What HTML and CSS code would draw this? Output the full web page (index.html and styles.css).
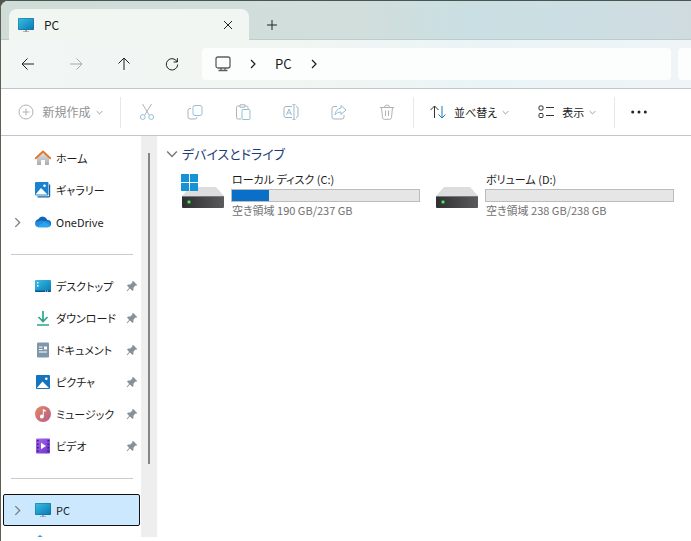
FILE: index.html
```html
<!DOCTYPE html>
<html lang="ja">
<head>
    <meta charset="UTF-8">
    <meta name="viewport" content="width=device-width, initial-scale=1.0">
    <title>PC</title>
    <link rel="stylesheet" href="styles.css">
</head>
<body>
    <!-- Shared icons -->
    <svg class="defs" width="0" height="0" aria-hidden="true">
        <defs>
            <linearGradient id="screen" x1="0" y1="0" x2="1" y2="1">
                <stop offset="0" stop-color="#35c1e0"/>
                <stop offset="1" stop-color="#0b76b8"/>
            </linearGradient>
            <linearGradient id="wall" x1="0" y1="0" x2="0" y2="1">
                <stop offset="0" stop-color="#e8e8ea"/>
                <stop offset="1" stop-color="#a9abb0"/>
            </linearGradient>
            <linearGradient id="disc" x1="0" y1="0" x2="1" y2="1">
                <stop offset="0" stop-color="#e58a5c"/>
                <stop offset="1" stop-color="#b65a92"/>
            </linearGradient>
            <linearGradient id="film" x1="0" y1="0" x2="1" y2="1">
                <stop offset="0" stop-color="#a866ee"/>
                <stop offset="1" stop-color="#6b35c9"/>
            </linearGradient>
            <linearGradient id="case" x1="0" y1="0" x2="1" y2="0">
                <stop offset="0" stop-color="#2f2f31"/>
                <stop offset="1" stop-color="#5a5a5c"/>
            </linearGradient>
            <symbol id="i-pc" viewBox="0 0 16 16">
                <path d="M7 12h2v2.200h2v.8H5v-.8h2z" fill="#98a2a8"/>
                <rect y="1" width="16" height="12" rx="1" fill="#1a6a8c"/>
                <rect x=".5" y="1.500" width="15" height="11" rx=".5" fill="url(#screen)"/>
            </symbol>
            <symbol id="i-right" viewBox="0 0 10 10">
                <path d="M3 1l4 4-4 4" fill="none" stroke="currentColor" stroke-width="1.200"/>
            </symbol>
            <symbol id="i-down" viewBox="0 0 10 10">
                <path d="M1 3l4 4 4-4" fill="none" stroke="currentColor" stroke-width="1.200"/>
            </symbol>
            <symbol id="i-pin" viewBox="0 0 12 12">
                <path d="M7 .8L11.200 5l-1 .8-.8-.2-2 2.200.1 2.200-1.100 1L4 8.600 1.200 11.300l-.7-.6L3.200 7.900 1 5.600l1-1.100 2.200.1 2.200-2L6.200 1.700z" fill="#87919b"/>
            </symbol>
            <symbol id="i-drive" viewBox="0 0 42 22">
                <path d="M8 0h26l8 9H0z" fill="#dcdddf"/>
                <rect y="9" width="42" height="12" rx="1" fill="url(#case)"/>
                <rect y="9" width="42" height="1" fill="#77797b"/>
                <circle cx="7" cy="15" r="2.200" fill="#2c7a35"/>
                <circle cx="7" cy="15" r="1.300" fill="#5be36c"/>
            </symbol>
        </defs>
    </svg>

    <div class="window">
        <header class="tabbar">
            <div class="tab">
                <svg class="icon"><use href="#i-pc"/></svg>
                <span class="tab-title">PC</span>
                <button class="tab-btn" aria-label="タブを閉じる">
                    <svg width="10" height="10" viewBox="0 0 10 10"><path d="M1 1l8 8M9 1L1 9"/></svg>
                </button>
            </div>
            <button class="tab-btn new-tab" aria-label="新しいタブ">
                <svg width="12" height="12" viewBox="0 0 12 12"><path d="M6 1v10M1 6h10"/></svg>
            </button>
        </header>

        <nav class="navbar">
            <button class="nav-btn" aria-label="戻る">
                <svg width="14" height="14" viewBox="0 0 14 14"><path d="M13 7H1.500M6.500 1.500L1 7l5.500 5.500"/></svg>
            </button>
            <button class="nav-btn" aria-label="進む" disabled>
                <svg width="14" height="14" viewBox="0 0 14 14"><path d="M1 7h11.500M7.500 1.500L13 7l-5.500 5.500"/></svg>
            </button>
            <button class="nav-btn" aria-label="上へ">
                <svg width="14" height="14" viewBox="0 0 14 14"><path d="M7 13V1.500M1.500 6.500L7 1l5.500 5.500"/></svg>
            </button>
            <button class="nav-btn" aria-label="最新の情報に更新">
                <svg width="14" height="14" viewBox="0 0 14 14"><path d="M12.200 5A5.700 5.700 0 1 0 12.700 7.500M12.400 1.200V5H8.600"/></svg>
            </button>
            <div class="address">
                <svg class="icon" viewBox="0 0 16 16"><path d="M3 1h10a2 2 0 0 1 2 2v7a2 2 0 0 1-2 2H3a2 2 0 0 1-2-2V3a2 2 0 0 1 2-2zM6 12v2.500M10 12v2.500M3.500 14.500h9" fill="none" stroke="#5b5f62" stroke-width="1.300"/></svg>
                <svg class="chevron"><use href="#i-right"/></svg>
                <a href="#">PC</a>
                <svg class="chevron"><use href="#i-right"/></svg>
            </div>
            <div class="search"></div>
        </nav>

        <div class="toolbar">
            <button class="tool new" disabled>
                <svg class="icon" viewBox="0 0 16 16"><circle cx="8" cy="8" r="7"/><path d="M8 4.500v7M4.500 8h7"/></svg>
                <span>新規作成</span>
                <svg class="caret"><use href="#i-down"/></svg>
            </button>
            <div class="tool-group">
                <button class="tool" aria-label="切り取り" disabled>
                    <svg class="icon" viewBox="0 0 16 16"><path d="M3.500 0l6.700 11M12.500 0L5.800 11"/><g class="blue"><circle cx="3.800" cy="13" r="2.400"/><circle cx="12.200" cy="13" r="2.400"/></g></svg>
                </button>
                <button class="tool" aria-label="コピー" disabled>
                    <svg class="icon" viewBox="0 0 16 16"><path d="M4 4.500H3a2 2 0 0 0-2 2V13a2 2 0 0 0 2 2h5a2 2 0 0 0 2-2"/><rect class="blue" x="6" y="1.500" width="9" height="10" rx="2"/></svg>
                </button>
                <button class="tool" aria-label="貼り付け" disabled>
                    <svg class="icon" viewBox="0 0 16 16"><path d="M6 15H3a1.500 1.500 0 0 1-1.500-1.500v-10A1.500 1.500 0 0 1 3 2h2M10 2h1.500A1.500 1.500 0 0 1 13 3.500V5M5 .8h5v2.400H5z"/><rect class="blue" x="7" y="5.500" width="8" height="10" rx="1"/></svg>
                </button>
                <button class="tool" aria-label="名前の変更" disabled>
                    <svg class="icon" viewBox="0 0 16 16"><path d="M9 2.500H3a2 2 0 0 0-2 2v7a2 2 0 0 0 2 2h6M13 2.500a2 2 0 0 1 2 2v7a2 2 0 0 1-2 2"/><path class="blue" d="M3.500 11L6 5l2.500 6M4.400 9h3.200M9.500.7h3M9.500 15.300h3M11 .7v14.600"/></svg>
                </button>
                <button class="tool" aria-label="共有" disabled>
                    <svg class="icon" viewBox="0 0 16 16"><path d="M6 2.500H3a2 2 0 0 0-2 2V13a2 2 0 0 0 2 2h8a2 2 0 0 0 2-2v-2"/><path class="blue" d="M10 1.500L15 6l-5 4.500V8C7 8 5.500 9 4 11c.3-4 2.500-6.500 6-7z"/></svg>
                </button>
                <button class="tool" aria-label="削除" disabled>
                    <svg class="icon" viewBox="0 0 16 16"><path d="M1 3.500h14M5.500 3.500a2.500 2.500 0 0 1 5 0M2.500 3.500l1 10A2 2 0 0 0 5.500 15.300h5a2 2 0 0 0 2-1.800l1-10M6.500 6.500v5.500M9.500 6.500v5.500"/></svg>
                </button>
            </div>
            <div class="view-group">
                <button class="tool">
                    <svg class="icon" viewBox="0 0 16 16"><path d="M4.500 14V2M.5 6l4-4 4 4"/><path class="sort-down" d="M12 2v12M8.500 10.500L12 14l3.500-3.500"/></svg>
                    <span>並べ替え</span>
                    <svg class="caret"><use href="#i-down"/></svg>
                </button>
                <button class="tool">
                    <svg class="icon" viewBox="0 0 16 16"><rect x="1" y="2" width="4" height="4" rx="1"/><rect x="1" y="9.500" width="4" height="4" rx="1"/><path d="M8 3.500h8M8 11.500h8"/></svg>
                    <span>表示</span>
                    <svg class="caret"><use href="#i-down"/></svg>
                </button>
            </div>
            <button class="tool more" aria-label="もっと見る">
                <svg class="icon" viewBox="0 0 16 16"><g fill="#222" stroke="none"><circle cx="1.700" cy="8" r="1.500"/><circle cx="8" cy="8" r="1.500"/><circle cx="14.300" cy="8" r="1.500"/></g></svg>
            </button>
        </div>

        <div class="main">
            <aside class="sidebar">
                <a class="item" href="#">
                    <svg class="icon" viewBox="0 0 16 16"><path d="M2 7l6-6 6 6v8h-4v-5H6v5H2z" fill="url(#wall)"/><path d="M.8 8.300L8 1.500l7.200 6.800" fill="none" stroke="#df7a2e" stroke-width="1.900" stroke-linecap="round" stroke-linejoin="round"/></svg>
                    <span>ホーム</span>
                </a>
                <a class="item" href="#">
                    <svg class="icon" viewBox="0 0 16 16"><path d="M14 2.500h1.200V14a1.500 1.500 0 0 1-1.500 1.500H2.500V14.300H14z" fill="#1d5f93"/><rect width="13.500" height="13.500" rx="1" fill="#1b82cf"/><path d="M.5 12.500L6 6l6.500 6.500z" fill="#fff"/><circle cx="9.500" cy="3.800" r="1.300" fill="#fff"/></svg>
                    <span>ギャラリー</span>
                </a>
                <a class="item" href="#">
                    <svg class="expander"><use href="#i-right"/></svg>
                    <svg class="icon" viewBox="0 0 16 16"><path d="M4 13a4 4 0 0 1-.8-7.800A5 5 0 0 1 12.300 6 3.500 3.500 0 0 1 13 13z" fill="#1266b8"/><path d="M3.500 13.200a3.300 3.300 0 0 1-2.700-5.200l4.700-1.200 7.500.5A3 3 0 0 1 13 13.200z" fill="#1e8fe0"/><path d="M2 12.800L9.500 8l5.800 3.500A3 3 0 0 1 13 13.200H3.500z" fill="#2ba6ee"/></svg>
                    <span>OneDrive</span>
                </a>
                <hr>
                <a class="item" href="#">
                    <svg class="icon" viewBox="0 0 16 16"><rect y="2" width="16" height="12" rx="1" fill="url(#screen)"/><path d="M2 4h1.500v1.500H2zM2 7h1.500v1.500H2z" fill="#fff"/><path d="M0 12.500h16V13a1 1 0 0 1-1 1H1a1 1 0 0 1-1-1z" fill="#0b578d"/><path d="M10 12.800h1v.8h-1zM12 12.800h1v.8h-1z" fill="#fff"/></svg>
                    <span>デスクトップ</span>
                    <svg class="pin"><use href="#i-pin"/></svg>
                </a>
                <a class="item" href="#">
                    <svg class="icon" viewBox="0 0 16 16"><path d="M8 1v10M3.500 7L8 11.500 12.500 7M2 15h12" fill="none" stroke="#2aa58c" stroke-width="1.700"/></svg>
                    <span>ダウンロード</span>
                    <svg class="pin"><use href="#i-pin"/></svg>
                </a>
                <a class="item" href="#">
                    <svg class="icon" viewBox="0 0 16 16"><rect x="2" y=".5" width="12" height="15" rx="1" fill="#8096aa"/><path d="M4 5h3.500M4 7.500h3.500M4 10h8" stroke="#fff"/><path d="M9 4.500h3v3H9z" fill="#fff"/></svg>
                    <span>ドキュメント</span>
                    <svg class="pin"><use href="#i-pin"/></svg>
                </a>
                <a class="item" href="#">
                    <svg class="icon" viewBox="0 0 16 16"><rect x="1" y="1" width="14" height="14" rx="1" fill="#1673bd"/><path d="M1.800 14L7.500 7.500 14 14z" fill="#fff"/><circle cx="11.300" cy="4.700" r="1.300" fill="#fff"/></svg>
                    <span>ピクチャ</span>
                    <svg class="pin"><use href="#i-pin"/></svg>
                </a>
                <a class="item" href="#">
                    <svg class="icon" viewBox="0 0 16 16"><circle cx="8" cy="8" r="8" fill="url(#disc)"/><path d="M7.800 3l3 1.200v1.500l-2-.7v5.600a1.900 1.900 0 1 1-1-1.700z" fill="#fff"/></svg>
                    <span>ミュージック</span>
                    <svg class="pin"><use href="#i-pin"/></svg>
                </a>
                <a class="item" href="#">
                    <svg class="icon" viewBox="0 0 16 16"><rect x="1" y=".5" width="14" height="15" rx="1" fill="url(#film)"/><path d="M2.800 2v13M13.200 2v13" stroke="#3b1b83" stroke-width="1.600" stroke-dasharray="1.600 1.800"/><path d="M6 4.800v6.400L11 8z" fill="#fff"/></svg>
                    <span>ビデオ</span>
                    <svg class="pin"><use href="#i-pin"/></svg>
                </a>
                <hr>
                <a class="item selected" href="#">
                    <svg class="expander"><use href="#i-right"/></svg>
                    <svg class="icon"><use href="#i-pc"/></svg>
                    <span>PC</span>
                </a>
                <a class="item" href="#">
                    <svg class="icon" viewBox="0 0 16 16"><path d="M1 4l4-3 4 3v4H1z" fill="#3f9bd0"/><rect x="1" y="7" width="14" height="8" rx="1" fill="#2a87c0"/></svg>
                    <span>ネットワーク</span>
                </a>
            </aside>
            <div class="gutter"><div class="thumb"></div></div>

            <section class="content">
                <h2>
                    <svg width="12" height="12"><use href="#i-down"/></svg>
                    デバイスとドライブ
                </h2>
                <div class="drives">
                    <div class="drive">
                        <div class="drive-icon">
                            <svg class="windows" width="17" height="17" viewBox="0 0 17 17"><path d="M0 0h8v8H0zM9 0h8v8H9zM0 9h8v8H0zM9 9h8v8H9z" fill="#1593d6"/></svg>
                            <svg class="disk"><use href="#i-drive"/></svg>
                        </div>
                        <div class="info">
                            <div class="name">ローカル ディスク (C:)</div>
                            <div class="bar"><div class="used" style="width: 20%"></div></div>
                            <div class="free">空き領域 190 GB/237 GB</div>
                        </div>
                    </div>
                    <div class="drive">
                        <div class="drive-icon">
                            <svg class="disk"><use href="#i-drive"/></svg>
                        </div>
                        <div class="info">
                            <div class="name">ボリューム (D:)</div>
                            <div class="bar"></div>
                            <div class="free">空き領域 238 GB/238 GB</div>
                        </div>
                    </div>
                </div>
            </section>
        </div>
    </div>
</body>
</html>
```
FILE: styles.css
```css
* {
    box-sizing: border-box;
}
body {
    margin: 0;
    background: #4f564d;
    color: #1b1b1b;
    font-family: "Noto Sans CJK JP", sans-serif;
    font-size: 11px;
    line-height: 16px;
    font-feature-settings: "palt";
}
.defs {
    position: absolute;
}
button {
    display: flex;
    align-items: center;
    justify-content: center;
    padding: 0;
    border: none;
    background: none;
    color: inherit;
    font: inherit;
    font-feature-settings: inherit;
}
a {
    color: inherit;
    text-decoration: none;
}
svg {
    display: block;
    flex: none;
}
.icon {
    width: 16px;
    height: 16px;
}
.window {
    display: flex;
    flex-direction: column;
    height: 100vh;
    border-top: 1px solid #4a5552;
    border-left: 1px solid #5d5f55;
    border-radius: 8px 0 0 0;
    background: #fff;
    overflow: hidden;
}

/* Tabs */
.tabbar {
    display: flex;
    flex: none;
    height: 39px;
    padding: 8px 8px 0;
    background: linear-gradient(90deg, #cfdcd8, #d1dedb 52%, #cadfe3 68%, #cddee3 88%, #d0dbdf);
    box-shadow: inset 0 -1px #bccbcb;
}
.tab {
    display: flex;
    align-items: center;
    width: 240px;
    padding: 0 9px;
    border-radius: 8px 8px 0 0;
    background: #f2f6f3;
}
.tab-title {
    flex: 1;
    padding-left: 10px;
    font-size: 12px;
}
.tab-btn {
    width: 24px;
    height: 31px;
}
.tab-btn svg, .nav-btn svg {
    fill: none;
    stroke: #222;
    stroke-width: 1;
}
.new-tab {
    margin-left: 11px;
}

/* Navigation */
.navbar {
    display: flex;
    align-items: center;
    flex: none;
    height: 49px;
    padding-left: 11px;
    background: linear-gradient(90deg, #f2f6f4, #f1f5f2 45%, #eaf4f6 70%, #eff4f7);
    border-bottom: 1px solid #bfc6c9;
}
.nav-btn {
    width: 32px;
    height: 32px;
    margin-right: 16px;
}
.nav-btn:disabled svg {
    stroke: #a5a9a8;
}
.address {
    display: flex;
    align-items: center;
    flex: 1;
    height: 32px;
    margin-left: -2px;
    padding-left: 13px;
    border-radius: 4px;
    background: #fcfdfd;
    font-size: 13px;
}
.address .chevron {
    width: 10px;
    height: 10px;
    margin: 0 17px;
}
.search {
    width: 13px;
    height: 32px;
    margin-left: 7px;
    border-radius: 4px 0 0 4px;
    background: #fcfdfd;
}

/* Toolbar */
.toolbar {
    display: flex;
    align-items: center;
    flex: none;
    height: 47px;
    border-bottom: 1px solid #bfc6c9;
}
.tool span {
    padding: 0 5px 0 8px;
}
.tool .icon {
    fill: none;
    stroke: #333;
    stroke-width: 1;
}
.tool:disabled {
    color: #8f9294;
}
.tool:disabled .icon {
    stroke: #adb3b8;
}
.tool:disabled .blue {
    stroke: #93bfd8;
}
.tool .sort-down {
    stroke: #1d78b5;
}
.caret {
    width: 7px;
    height: 7px;
    color: #8a8d8f;
}
.new {
    width: 119px;
    font-size: 12px;
}
.tool-group, .view-group {
    display: flex;
    align-items: center;
    height: 31px;
    border-left: 1px solid #e6e8e9;
}
.tool-group {
    gap: 32px;
    padding: 0 18px;
}
.view-group {
    gap: 29px;
    padding: 0 18px 0 16px;
    border-right: 1px solid #e6e8e9;
}
.more {
    margin-left: 16px;
}

/* Sidebar */
.main {
    display: flex;
    flex: 1;
    min-height: 0;
}
.sidebar {
    width: 140px;
    margin-bottom: 4px;
    padding: 6px 1px 0 2px;
    overflow: hidden;
}
.item {
    display: flex;
    align-items: center;
    position: relative;
    height: 32px;
    padding: 0 2px 0 32px;
}
.item span {
    flex: 1;
    padding-left: 5px;
    white-space: nowrap;
}
.expander {
    position: absolute;
    left: 9px;
    width: 11px;
    height: 11px;
    color: #7c7f82;
}
.pin {
    width: 12px;
    height: 12px;
}
.selected {
    padding-left: 31px;
    border: 1px solid #111;
    border-radius: 2px;
    background: #cce8ff;
}
.selected .expander {
    left: 8px;
}
hr {
    height: 1px;
    margin: 16px 7px 15px 8px;
    border: none;
    background: #c9cbcc;
}
.gutter {
    width: 16px;
    margin-bottom: 4px;
    padding: 17px 7px 0;
    background: #eee;
}
.thumb {
    width: 2px;
    height: 81%;
    max-height: 311px;
    background: #858585;
}

/* Drives */
.content {
    flex: 1;
    padding: 8px 0 0 9px;
}
h2 {
    display: flex;
    align-items: center;
    gap: 4px;
    margin: 0;
    font-size: 13px;
    font-weight: normal;
    line-height: 20px;
    color: #1e3a78;
}
h2 svg {
    color: #777;
}
.drives {
    display: grid;
    grid-template-columns: repeat(auto-fill, 254px);
    padding-left: 16px;
}
.drive {
    display: flex;
    gap: 7px;
    padding: 7px 16px 0 0;
}
.drive-icon {
    position: relative;
    width: 42px;
    padding-top: 16px;
}
.windows {
    position: absolute;
    top: 3px;
    left: -1px;
}
.disk {
    width: 42px;
    height: 22px;
}
.info {
    flex: 1;
    white-space: nowrap;
}
.name, .free {
    padding-left: 1px;
}
.bar {
    height: 13px;
    margin-top: 2px;
    border: 1px solid #bcbcbc;
    background: #e6e6e6;
}
.used {
    height: 100%;
    background: #0a6fc6;
}
.free {
    color: #707070;
}
```
